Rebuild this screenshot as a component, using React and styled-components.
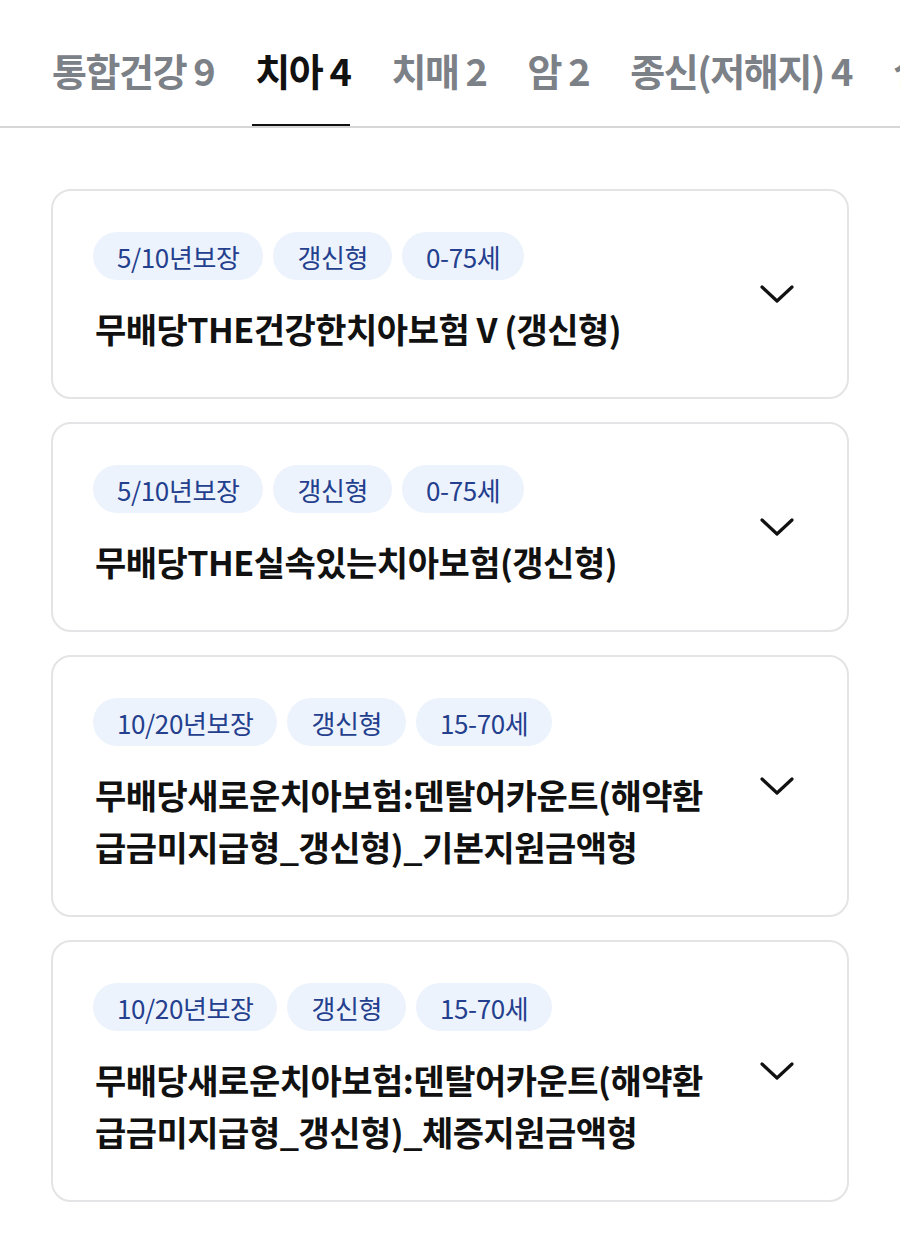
import React from 'react';
import styled, { createGlobalStyle } from 'styled-components';

const GlobalStyle = createGlobalStyle`
  html, body {
    margin: 0;
    padding: 0;
    background: #fff;
  }
  body {
    font-family: "Noto Sans CJK KR", "Noto Sans", sans-serif;
    color: #111;
  }
`;

const TABS = [
  { label: '통합건강', count: 9 },
  { label: '치아', count: 4, active: true },
  { label: '치매', count: 2 },
  { label: '암', count: 2 },
  { label: '종신(저해지)', count: 4 },
  { label: '실손', count: 3 },
];

const PRODUCTS = [
  {
    tags: ['5/10년보장', '갱신형', '0-75세'],
    title: '무배당THE건강한치아보험 V (갱신형)',
  },
  {
    tags: ['5/10년보장', '갱신형', '0-75세'],
    title: '무배당THE실속있는치아보험(갱신형)',
  },
  {
    tags: ['10/20년보장', '갱신형', '15-70세'],
    title: '무배당새로운치아보험:덴탈어카운트(해약환급금미지급형_갱신형)_기본지원금액형',
  },
  {
    tags: ['10/20년보장', '갱신형', '15-70세'],
    title: '무배당새로운치아보험:덴탈어카운트(해약환급금미지급형_갱신형)_체증지원금액형',
  },
];

const Page = styled.div`
  width: 900px;
  overflow: hidden;
`;

const TabBar = styled.nav`
  display: flex;
  gap: 41px;
  padding: 0 0 0 52px;
  height: 126px;
  border-bottom: 2px solid #d6d6d6;
  white-space: nowrap;
  overflow: hidden;
`;

const Tab = styled.div`
  position: relative;
  display: flex;
  align-items: center;
  padding-top: 12px;
  font-size: 38px;
  font-weight: 700;
  letter-spacing: -1.4px;
  color: ${p => (p.$active ? '#111' : '#7c8087')};

  &::after {
    content: '';
    position: absolute;
    left: -3px;
    right: 0;
    bottom: -2px;
    height: 4px;
    background: ${p => (p.$active ? '#111' : 'transparent')};
  }
`;

const Count = styled.span`
  margin-left: 7px;
`;

const List = styled.div`
  display: flex;
  flex-direction: column;
  gap: 23px;
  padding: 61px 51px 40px;
`;

const Card = styled.div`
  display: flex;
  align-items: center;
  gap: 30px;
  padding: 41px 40px 42px 40px;
  border: 2px solid #e4e4e6;
  border-radius: 20px;
`;

const Body = styled.div`
  flex: 1;
  min-width: 0;
`;

const Tags = styled.div`
  display: flex;
  gap: 10px;
  margin-bottom: 23px;
`;

const Tag = styled.span`
  display: inline-flex;
  align-items: center;
  height: 48px;
  padding: 0 24px;
  border-radius: 24px;
  background: #edf3fc;
  color: #243f8e;
  font-size: 26px;
  letter-spacing: -0.4px;
`;

const Title = styled.div`
  padding-left: 2px;
  font-size: 34px;
  font-weight: 700;
  line-height: 52px;
  color: #111;
  letter-spacing: -0.5px;
`;

const Toggle = styled.div`
  width: 60px;
  display: flex;
  justify-content: center;
  align-items: center;
`;

const Chevron = () => (
  <svg width="36" height="22" viewBox="0 0 36 22" fill="none">
    <path d="M3 4 L18 18 L33 4" stroke="#111" strokeWidth="3.2" strokeLinecap="round" strokeLinejoin="round" />
  </svg>
);

export default function App() {
  return (
    <Page>
      <GlobalStyle />
      <TabBar>
        {TABS.map(t => (
          <Tab key={t.label} $active={t.active}>
            {t.label}
            <Count>{t.count}</Count>
          </Tab>
        ))}
      </TabBar>
      <List>
        {PRODUCTS.map((p, i) => (
          <Card key={i}>
            <Body>
              <Tags>
                {p.tags.map(tag => (
                  <Tag key={tag}>{tag}</Tag>
                ))}
              </Tags>
              <Title>{p.title}</Title>
            </Body>
            <Toggle>
              <Chevron />
            </Toggle>
          </Card>
        ))}
      </List>
    </Page>
  );
}
